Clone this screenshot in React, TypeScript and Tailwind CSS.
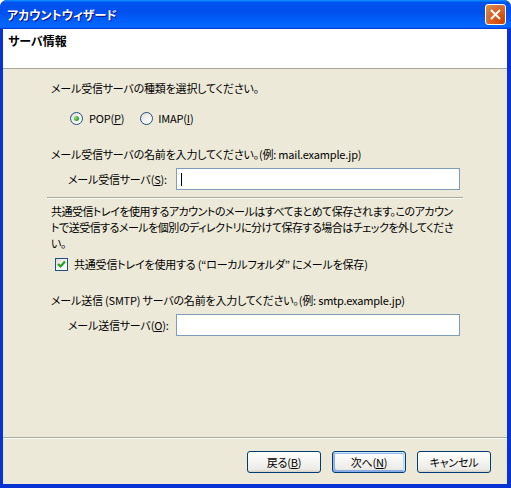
import React from 'react';

const Radio: React.FC<{ checked?: boolean }> = ({ checked }) => (
  <span className="flex h-[13px] w-[13px] shrink-0 items-center justify-center rounded-full border border-[#1c5180] bg-[linear-gradient(135deg,#dcdad5,#f4f3ee_50%,#ffffff)]">
    {checked && <span className="h-[5px] w-[5px] rounded-full bg-[radial-gradient(circle_at_35%_35%,#8be28b,#21a121_70%)]" />}
  </span>
);

const Checkbox: React.FC = () => (
  <span className="flex h-[13px] w-[13px] shrink-0 items-center justify-center border border-[#1c5180] bg-[linear-gradient(135deg,#dcdad5,#f4f3ee_50%,#ffffff)]">
    <svg width="9" height="9" viewBox="0 0 9 9">
      <polyline points="1,4 3.5,6.5 8,1.5" fill="none" stroke="#21a121" strokeWidth="2.2" />
    </svg>
  </span>
);

const XpButton: React.FC<{ children: React.ReactNode; isDefault?: boolean }> = ({ children, isDefault }) => (
  <div
    className={
      'flex h-[22px] w-[74px] items-center justify-center rounded-[3px] border border-[#003c74] bg-[linear-gradient(180deg,#ffffff,#ecebe6_86%,#d6d0c5)] text-black ' +
      (isDefault
        ? 'shadow-[inset_-1px_1px_#cee7ff,inset_1px_2px_#98b8ea,inset_-2px_2px_#bcd4f6,inset_1px_-1px_#89ade4,inset_2px_-2px_#89ade4]'
        : '')
    }
  >
    {children}
  </div>
);

export default function App() {
  return (
    <div className="h-[488px] w-[511px] bg-white font-['Noto_Sans_CJK_JP',sans-serif] text-[11px] leading-[15px] tracking-[-0.2px] text-black [font-feature-settings:'palt']">
      <div className="flex h-full flex-col overflow-hidden rounded-t-[7px] bg-[#0831d9]">
        {/* title bar */}
        <div className="flex h-[29px] shrink-0 items-center justify-between bg-[linear-gradient(180deg,#0997ff_0%,#0053ee_8%,#0050ee_40%,#0066ff_88%,#0066ff_93%,#005bff_95%,#003dd7_96%,#003dd7_100%)] pl-[7px] pr-[5px]">
          <span className="text-[12px] font-bold tracking-normal text-white [text-shadow:1px_1px_#0f1089]">アカウントウィザード</span>
          <div className="flex h-[21px] w-[21px] items-center justify-center rounded-[3px] border border-white bg-[radial-gradient(circle_at_85%_85%,#cc4600_0%,#dc6527_55%,#cd7546_70%,#e5a01a_100%)]">
            <svg width="11" height="11" viewBox="0 0 11 11">
              <path d="M1 1 L10 10 M10 1 L1 10" stroke="white" strokeWidth="2" />
            </svg>
          </div>
        </div>

        <div className="flex flex-1 flex-col border-b-[4px] border-l-[3px] border-r-[4px] border-[#0733d2] bg-[#ece9d8]">
          {/* header */}
          <div className="h-[40px] shrink-0 border-b border-[#aca899] bg-white pl-[5px] pt-[4px] text-[12px] font-bold tracking-normal">サーバ情報</div>

          {/* content */}
          <div className="flex flex-1 flex-col whitespace-nowrap pl-[48px]">
            <div className="mt-[12px]">メール受信サーバの種類を選択してください。</div>

            <div className="mt-[15px] ml-[19px] flex items-center">
              <Radio checked />
              <span className="ml-[6px]">
                POP(<span className="underline">P</span>)
              </span>
              <span className="ml-[16px]">
                <Radio />
              </span>
              <span className="ml-[5px]">
                IMAP(<span className="underline">I</span>)
              </span>
            </div>

            <div className="mt-[21px]">メール受信サーバの名前を入力してください。(例: mail.example.jp)</div>

            <div className="mt-[6px] flex items-center">
              <span className="ml-[17px] w-[108px] shrink-0">
                メール受信サーバ(<span className="underline">S</span>):
              </span>
              <div className="flex h-[22px] w-[284px] items-center border border-[#7f9db9] bg-white pl-[4px]">
                <span className="h-[13px] w-px bg-black" />
              </div>
            </div>

            <div className="mt-[7px] -ml-[4px] w-[416px] border-b border-t border-b-white border-t-[#aca899]" />

            <div className="mt-[4px] leading-[16px] tracking-[-0.5px]">
              共通受信トレイを使用するアカウントのメールはすべてまとめて保存されます。このアカウン
              <br />
              トで送受信するメールを個別のディレクトリに分けて保存する場合はチェックを外してくださ
              <br />
              い。
            </div>

            <div className="mt-[6px] ml-[4px] flex items-center">
              <Checkbox />
              <span className="ml-[6px]">共通受信トレイを使用する (“ローカルフォルダ” にメールを保存)</span>
            </div>

            <div className="mt-[21px]">メール送信 (SMTP) サーバの名前を入力してください。(例: smtp.example.jp)</div>

            <div className="mt-[6px] flex items-center">
              <span className="ml-[17px] w-[108px] shrink-0">
                メール送信サーバ(<span className="underline">O</span>):
              </span>
              <div className="h-[22px] w-[284px] border border-[#7f9db9] bg-white" />
            </div>
          </div>

          <div className="shrink-0 border-b border-t border-b-white border-t-[#aca899]" />

          {/* buttons */}
          <div className="flex shrink-0 justify-end gap-[11px] pb-[11px] pr-[16px] pt-[12px]">
            <XpButton>
              戻る(<span className="underline">B</span>)
            </XpButton>
            <XpButton isDefault>
              次へ(<span className="underline">N</span>)
            </XpButton>
            <XpButton>キャンセル</XpButton>
          </div>
        </div>
      </div>
    </div>
  );
}
